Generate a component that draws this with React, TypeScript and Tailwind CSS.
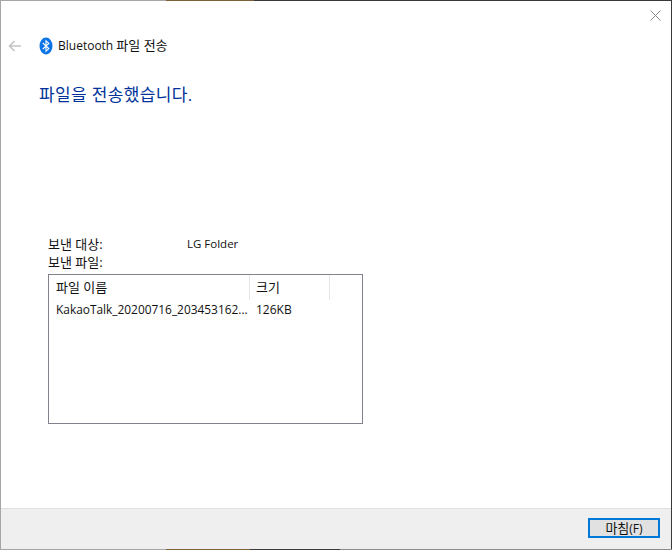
const KR = "font-['Open_Sans','Noto_Sans_CJK_KR',sans-serif]";

function BluetoothIcon() {
  return (
    <svg width="14" height="18" viewBox="0 0 14 18" className="shrink-0">
      <ellipse cx="7" cy="9" rx="6.5" ry="8.5" fill="#0a74e6" />
      <path d="M3.8 6 L9.8 11.6 L7 14.2 L7 3.8 L9.8 6.4 L3.8 12" fill="none" stroke="#fff" strokeWidth="1.1" />
    </svg>
  );
}

function Ko({ children }: { children: string }) {
  return <span className="text-[13px]">{children}</span>;
}

export default function App() {
  return (
    <div className={`${KR} w-[672px] h-[550px] flex flex-col bg-white overflow-hidden text-[12px] text-[#111]`}>
      {/* 창 테두리 위쪽 */}
      <div className="h-px flex shrink-0">
        <div className="w-[166px] bg-[#a6a6a6]" />
        <div className="w-[88px] bg-[#7f5f35]" />
        <div className="flex-1 bg-[#3a3a3a]" />
      </div>

      <div className="flex-1 flex flex-col border-l border-l-[#a6a6a6] border-r border-r-[#3a3a3a] min-h-0">
        <div className="flex justify-end pt-[9px] pr-[10px] h-[29px]">
          <svg width="11" height="11" viewBox="0 0 11 11">
            <path d="M0.5 0.5 L10.5 10.5 M10.5 0.5 L0.5 10.5" stroke="#8a8a8a" strokeWidth="1" />
          </svg>
        </div>

        <div className="flex items-center h-[32px] pl-[7px]">
          <svg width="14" height="12" viewBox="0 0 14 12" className="shrink-0">
            <path d="M13 6 H1.5 M6.5 1 L1.5 6 L6.5 11" fill="none" stroke="#c4c4c4" strokeWidth="1.6" />
          </svg>
          <div className="ml-[17px]"><BluetoothIcon /></div>
          <span className="ml-[5px]">Bluetooth <Ko>파일 전송</Ko></span>
        </div>

        <h1 className="mt-[21px] ml-[38px] text-[17px] tracking-[0.35px] leading-[24px] font-normal text-[#003399]">파일을 전송했습니다.</h1>

        <div className="mt-[129px] ml-[47px] w-[315px]">
          <div className="flex h-[17px] leading-[17px]">
            <span className="w-[139px]"><Ko>보낸 대상:</Ko></span>
            <span className="text-[11.5px] leading-[15px]">LG Folder</span>
          </div>
          <div className="mt-px h-[17px] leading-[17px]"><Ko>보낸 파일:</Ko></div>

          <div className="mt-[3px] h-[150px] border border-[#82828c] bg-white">
            <div className="flex h-[25px] leading-[24px]">
              <div className="w-[201px] pl-[7px] border-r border-r-[#e5e5e5]"><Ko>파일 이름</Ko></div>
              <div className="w-[80px] pl-[6px] border-r border-r-[#e5e5e5]"><Ko>크기</Ko></div>
            </div>
            <div className="flex h-[19px] leading-[19px]">
              <div className="w-[201px] pl-[7px] text-[11.9px] whitespace-nowrap overflow-hidden">KakaoTalk_20200716_203453162...</div>
              <div className="pl-[6px]">126KB</div>
            </div>
          </div>
        </div>

        <div className="mt-auto h-[41px] bg-[#efefef] border-t border-t-[#dfdfdf] flex justify-end items-start pt-[9px] pr-[11px]">
          <button className={`${KR} w-[72px] h-[20px] border-2 border-[#0078d7] bg-[#e1e1e1] text-[12px] text-[#111] leading-none`}><Ko>마침</Ko>(F)</button>
        </div>
      </div>

      {/* 창 테두리 아래쪽 */}
      <div className="h-px flex shrink-0">
        <div className="w-[166px] bg-[#a6a6a6]" />
        <div className="w-[84px] bg-[#7f5f35]" />
        <div className="w-[90px] bg-[#3a3a3a]" />
        <div className="flex-1 bg-[#8c8c8c]" />
      </div>
    </div>
  );
}
